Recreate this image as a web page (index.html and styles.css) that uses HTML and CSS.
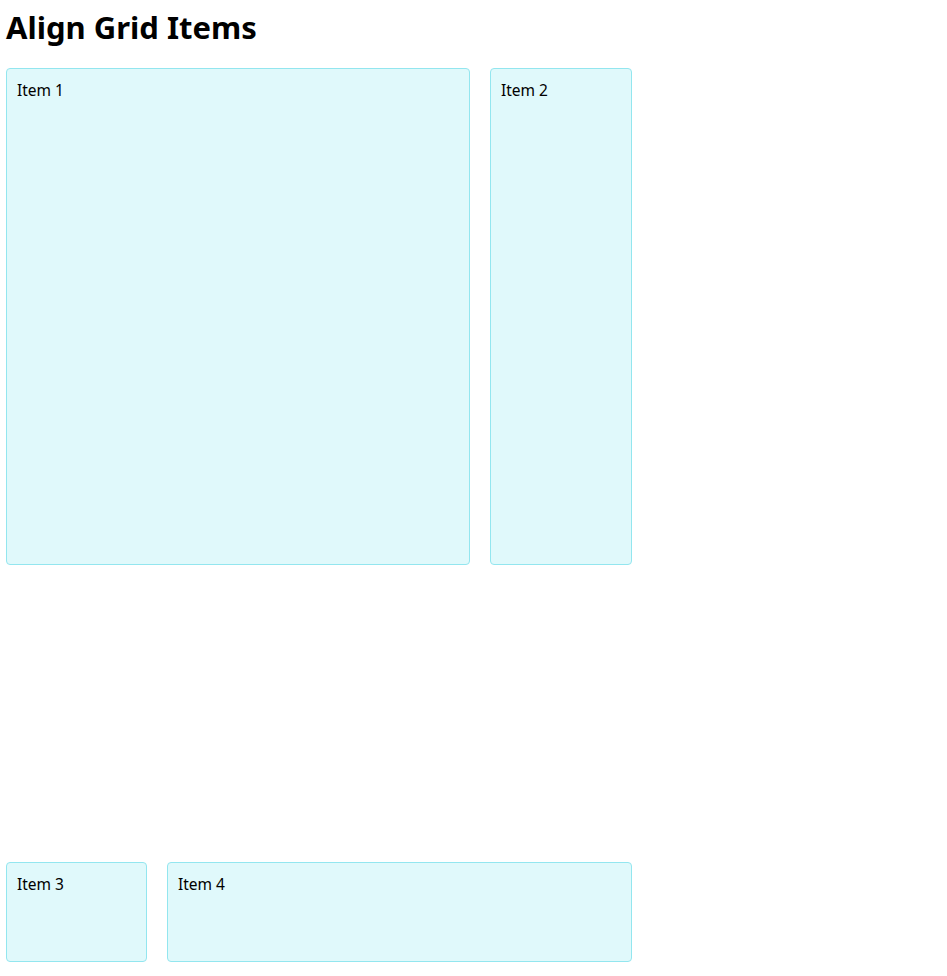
FILE: index.html
```html
<!DOCTYPE html>
<html lang="en">
<head>
<meta charset="utf-8">
<title>Align Grid Items</title>
<link rel="stylesheet" href="styles.css">
</head>
<body>
<h1 class="title">Align Grid Items</h1>
<div class="grid">
  <div class="item item-1">Item 1</div>
  <div class="item item-2">Item 2</div>
  <div class="item item-3">Item 3</div>
  <div class="item item-4">Item 4</div>
</div>
</body>
</html>
```

FILE: styles.css
```css
html, body {
  margin: 0;
  padding: 0;
  background: #ffffff;
}
body {
  padding: 6px;
  font-family: "Noto Sans", "Noto Sans CJK KR", sans-serif;
  color: #000000;
}
.title {
  margin: 0 0 20px 0;
  font-size: 31px;
  line-height: 42px;
  font-weight: 700;
}
.grid {
  display: grid;
  width: 626px;
  grid-template-columns: 141px 303px 142px;
  grid-template-rows: 497px 100px;
  column-gap: 20px;
  row-gap: 297px;
}
.item {
  box-sizing: border-box;
  background: #e0f9fb;
  border: 1px solid #93e6ef;
  border-radius: 4px;
  padding: 10px 10px;
  font-size: 15.5px;
  line-height: 22px;
}
.item-1 { grid-column: 1 / 3; grid-row: 1; }
.item-2 { grid-column: 3; grid-row: 1; }
.item-3 { grid-column: 1; grid-row: 2; }
.item-4 { grid-column: 2 / 4; grid-row: 2; }
```
